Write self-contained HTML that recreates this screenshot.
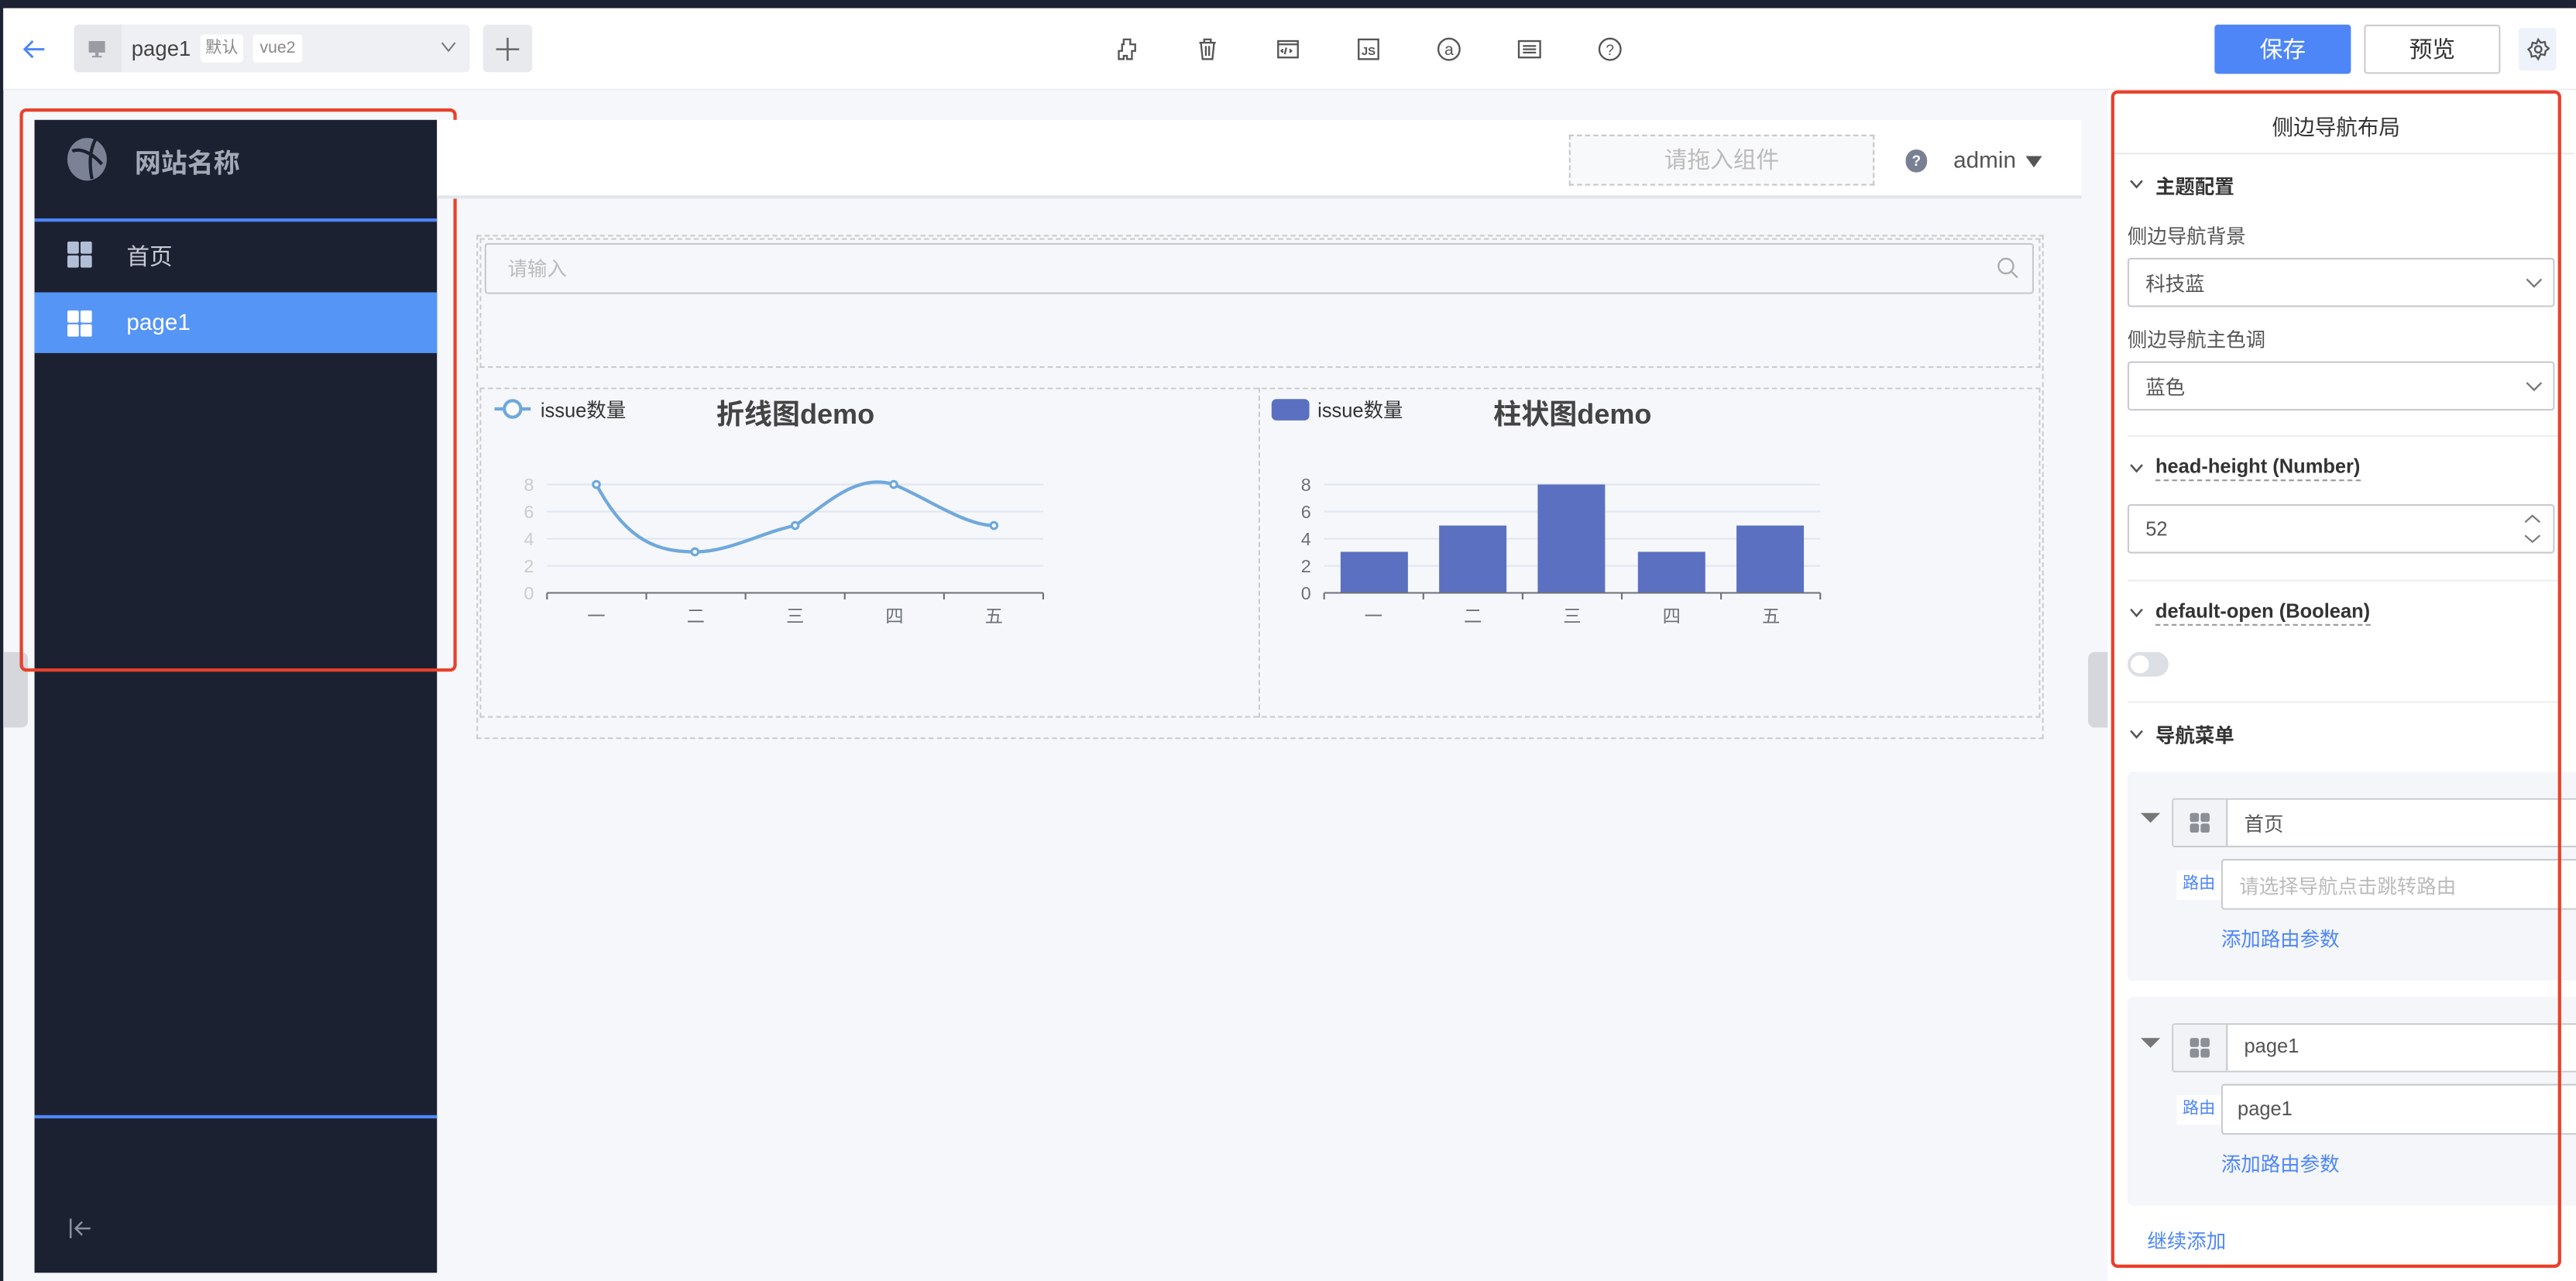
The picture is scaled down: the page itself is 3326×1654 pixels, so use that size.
<!DOCTYPE html>
<html><head><meta charset="utf-8">
<style>
*{box-sizing:border-box;margin:0;padding:0}
html,body{width:3326px;height:1654px;overflow:hidden;background:#f5f7fa}
#r{position:absolute;left:0;top:0;width:1568px;height:780px;transform:scale(2.12117,2.1205);transform-origin:0 0;font-family:"Liberation Sans","Noto Sans CJK SC",sans-serif;color:#333;background:#f5f7fa}
.a{position:absolute}
.t{white-space:nowrap}
</style></head><body><div id="r">
<div class="a" style="left:0;top:0;width:1568px;height:5px;background:#1c2133"></div>
<div class="a" style="left:0;top:0;width:2px;height:780px;background:#1c2133"></div>
<div class="a" style="left:2px;top:5px;width:1566px;height:50px;background:#fff;border-bottom:1px solid #eceef2"></div>
<svg class="a" style="left:13px;top:22px" width="16" height="16" viewBox="0 0 16 16"><path d="M14 8H2M7 3L2 8l5 5" stroke="#4e86f7" stroke-width="1.4" fill="none"/></svg>
<div class="a" style="left:45px;top:15px;width:241px;height:29px;background:#eff0f3;border-radius:3px"></div>
<div class="a" style="left:45px;top:15px;width:29px;height:29px;background:#e6e7eb;border-radius:3px 0 0 3px"></div>
<svg class="a" style="left:54px;top:25px" width="10" height="10" viewBox="0 0 10 10"><rect x="0" y="0" width="10" height="7" fill="#9a9ca3"/><rect x="4" y="7" width="2" height="2" fill="#9a9ca3"/><rect x="2" y="9" width="6" height="1" fill="#9a9ca3"/></svg>
<div class="a t" style="left:80px;top:22px;font-size:13px;color:#444">page1</div>
<div class="a t" style="left:122px;top:21px;width:26px;height:17px;background:#fff;border-radius:2px;font-size:10px;color:#888;text-align:center;line-height:17px">默认</div>
<div class="a t" style="left:154px;top:21px;width:30px;height:17px;background:#fff;border-radius:2px;font-size:10px;color:#888;text-align:center;line-height:17px">vue2</div>
<svg class="a" style="left:268px;top:25px" width="10" height="8"><path d="M1 1l4 5 4-5" stroke="#777" fill="none"/></svg>
<div class="a" style="left:294px;top:15px;width:30px;height:29px;background:#e9eaee;border-radius:3px"></div>
<svg class="a" style="left:301px;top:22px" width="16" height="16"><path d="M8 1v14M1 8h14" stroke="#666" stroke-width="1.2"/></svg>
<svg class="a" style="left:678px;top:22px" width="16" height="16" viewBox="0 0 16 16" fill="none" stroke="#555" stroke-width="1.1"><path d="M6 2h4v3h3v4h-2v5H8v-2H6v2H3V9h2V5h1z"/></svg>
<svg class="a" style="left:727px;top:22px" width="16" height="16" viewBox="0 0 16 16" fill="none" stroke="#555" stroke-width="1.1"><path d="M3 4h10M6 4V2h4v2M4 4l1 10h6l1-10M7 6v6M9 6v6"/></svg>
<svg class="a" style="left:776px;top:22px" width="16" height="16" viewBox="0 0 16 16" fill="none" stroke="#555" stroke-width="1.1"><rect x="2" y="3" width="12" height="10"/><path d="M2 5h12M7 7l-1 4M5 8l-1 1 1 1M9 8l1 1-1 1"/></svg>
<svg class="a" style="left:825px;top:22px" width="16" height="16" viewBox="0 0 16 16" fill="none" stroke="#555" stroke-width="1.1"><rect x="2" y="2" width="12" height="12"/><text x="8" y="11.5" font-size="7" text-anchor="middle" fill="#555" stroke="none" font-family="Liberation Sans" font-weight="bold">JS</text></svg>
<svg class="a" style="left:874px;top:22px" width="16" height="16" viewBox="0 0 16 16" fill="none" stroke="#555" stroke-width="1.1"><circle cx="8" cy="8" r="6.5"/><text x="8" y="11.5" font-size="10" text-anchor="middle" fill="#555" stroke="none" font-family="Liberation Sans">a</text></svg>
<svg class="a" style="left:923px;top:22px" width="16" height="16" viewBox="0 0 16 16" fill="none" stroke="#555" stroke-width="1.1"><rect x="1.5" y="3" width="13" height="10"/><path d="M4 6h8M4 8h8M4 10h8"/></svg>
<svg class="a" style="left:972px;top:22px" width="16" height="16" viewBox="0 0 16 16" fill="none" stroke="#555" stroke-width="1.1"><circle cx="8" cy="8" r="6.5"/><text x="8" y="11.5" font-size="9" text-anchor="middle" fill="#555" stroke="none" font-family="Liberation Sans">?</text></svg>
<div class="a t" style="left:1348px;top:15px;width:83px;height:30px;background:#4e86f7;border-radius:2px;color:#fff;font-size:14px;text-align:center;line-height:30px">保存</div>
<div class="a t" style="left:1439px;top:15px;width:83px;height:30px;background:#fff;border:1px solid #ccc;border-radius:2px;color:#333;font-size:14px;text-align:center;line-height:28px">预览</div>
<div class="a" style="left:1533px;top:17px;width:23px;height:26px;background:#eef2fb;border-radius:2px"></div>
<svg class="a" style="left:1538px;top:23px" width="14" height="14" viewBox="0 0 14 14" fill="none" stroke="#555" stroke-width="1.1"><circle cx="7" cy="7" r="2"/><path d="M7 1l1.5 2 2.5-.5.5 2.5 2 1.5-2 1.5-.5 2.5-2.5-.5L7 13l-1.5-2-2.5.5-.5-2.5L1 7l2-1.5.5-2.5 2.5.5z"/></svg>

<div class="a" style="left:2px;top:397px;width:15px;height:46px;background:#d5d7dc;border-radius:0 4px 4px 0"></div>
<div class="a" style="left:1271px;top:397px;width:12px;height:46px;background:#d5d7dc;border-radius:4px 0 0 4px"></div>

<div class="a" style="left:21px;top:73px;width:245px;height:702px;background:#1c2132"></div>
<svg class="a" style="left:40px;top:83px" width="28" height="28" viewBox="0 0 28 28"><ellipse cx="13" cy="14" rx="12" ry="13" fill="#7b8295"/><path d="M4 9c5-2 12 1 18 8M18 2c-3 6-4 14-2 24" stroke="#1c2132" stroke-width="2" fill="none"/></svg>
<div class="a t" style="left:82px;top:86px;font-size:16px;font-weight:bold;color:#a3a8b5">网站名称</div>
<div class="a" style="left:21px;top:133px;width:245px;height:1.5px;background:#4e86f7"></div>
<svg class="a" style="left:41px;top:147px" width="15" height="16" viewBox="0 0 15 16" fill="#b2bed6"><rect width="7" height="7.5" rx="1"/><rect x="8" width="7" height="7.5" rx="1"/><rect y="8.5" width="7" height="7.5" rx="1"/><rect x="8" y="8.5" width="7" height="7.5" rx="1"/></svg>
<div class="a t" style="left:77px;top:146px;font-size:14px;color:#c7cbd4">首页</div>
<div class="a" style="left:21px;top:178px;width:245px;height:37px;background:#5595f5"></div>
<svg class="a" style="left:41px;top:189px" width="15" height="16" viewBox="0 0 15 16" fill="#fff"><rect width="7" height="7.5" rx="1"/><rect x="8" width="7" height="7.5" rx="1"/><rect y="8.5" width="7" height="7.5" rx="1"/><rect x="8" y="8.5" width="7" height="7.5" rx="1"/></svg>
<div class="a t" style="left:77px;top:188px;font-size:14px;color:#fff">page1</div>
<div class="a" style="left:21px;top:679px;width:245px;height:1.5px;background:#4e86f7"></div>
<svg class="a" style="left:42px;top:742px" width="14" height="12" viewBox="0 0 14 12" fill="none" stroke="#8a90a0" stroke-width="1.2"><path d="M1 0v12M13 6H4M8 2L4 6l4 4"/></svg>
<div class="a" style="left:12px;top:66px;width:266px;height:343px;border:2px solid #e8412c;border-radius:4px"></div>

<div class="a" style="left:266px;top:73px;width:1001px;height:48px;background:#fff;border-bottom:2px solid #e2e5ea"></div>
<div class="a t" style="left:955px;top:82px;width:186px;height:31px;border:1px dashed #c8c8c8;background:#f8f9fa;color:#bbb;font-size:14px;text-align:center;line-height:29px">请拖入组件</div>
<div class="a" style="left:1160px;top:91px;width:13px;height:14px;border-radius:7px;background:#7a8094;color:#fff;font-size:9px;text-align:center;line-height:14px;font-weight:bold">?</div>
<div class="a t" style="left:1189px;top:89px;font-size:14px;color:#555">admin</div>
<svg class="a" style="left:1233px;top:95px" width="10" height="7"><path d="M0 0h10L5 7z" fill="#555"/></svg>

<div class="a" style="left:290px;top:143px;width:954px;height:307px;border:1px dashed #ccc"></div>
<div class="a" style="left:292px;top:145px;width:950px;height:79px;border:1px dashed #ccc"></div>
<div class="a" style="left:295px;top:148px;width:943px;height:31px;border:1px solid #c6c8cc;border-radius:2px"></div>
<div class="a t" style="left:309px;top:155px;font-size:12px;color:#bbb">请输入</div>
<svg class="a" style="left:1215px;top:156px" width="14" height="14" fill="none" stroke="#aaa" stroke-width="1.1"><circle cx="6" cy="6" r="4.5"/><path d="M9.5 9.5L13 13"/></svg>
<div class="a" style="left:292px;top:236px;width:950px;height:201px;border:1px dashed #ccc"></div>
<div class="a" style="left:766px;top:236px;width:1px;height:201px;border-left:1px dashed #ccc"></div>

<svg class="a" style="left:292px;top:236px" width="950" height="200" font-family="Liberation Sans,Noto Sans CJK SC,sans-serif">
 <path d="M9 13h22" stroke="#6fa8dc" stroke-width="2"/><circle cx="20" cy="13" r="5" fill="#fff" stroke="#6fa8dc" stroke-width="2"/>
 <text x="37" y="18" font-size="12" fill="#333">issue数量</text>
 <text x="144" y="22" font-size="17" font-weight="bold" fill="#444">折线图demo</text>
 <g stroke="#e0e6f1"><path d="M41 59h302M41 75.5h302M41 92h302M41 108.5h302"/></g>
 <path d="M41 125h302M41 125v4M101.4 125v4M161.8 125v4M222.2 125v4M282.6 125v4M343 125v4" stroke="#6e7079" stroke-width="1"/>
 <g font-size="11" fill="#ccc" text-anchor="end"><text x="33" y="63">8</text><text x="33" y="79.5">6</text><text x="33" y="96">4</text><text x="33" y="112.5">2</text><text x="33" y="129">0</text></g>
 <g font-size="11" fill="#6e7079" text-anchor="middle"><text x="71" y="143">一</text><text x="131.5" y="143">二</text><text x="192" y="143">三</text><text x="252.5" y="143">四</text><text x="313" y="143">五</text></g>
 <path d="M71 59C90 95 110 100 131 100C152 100 172 88 192 84C212 70 230 52 252 59C270 66 295 84 313 84" stroke="#6fa8dc" stroke-width="2" fill="none"/>
 <g fill="#fff" stroke="#6fa8dc" stroke-width="1.5"><circle cx="71" cy="59" r="2"/><circle cx="131" cy="100" r="2"/><circle cx="192" cy="84" r="2"/><circle cx="252" cy="59" r="2"/><circle cx="313" cy="84" r="2"/></g>
 <rect x="482" y="7" width="23" height="13" rx="3" fill="#5b70c1"/>
 <text x="510" y="18" font-size="12" fill="#333">issue数量</text>
 <text x="617" y="22" font-size="17" font-weight="bold" fill="#444">柱状图demo</text>
 <g stroke="#e0e6f1"><path d="M514 59h302M514 75.5h302M514 92h302M514 108.5h302"/></g>
 <g fill="#5b70c1"><rect x="524" y="100" width="41" height="25"/><rect x="584" y="84" width="41" height="41"/><rect x="644" y="59" width="41" height="66"/><rect x="705" y="100" width="41" height="25"/><rect x="765" y="84" width="41" height="41"/></g>
 <path d="M514 125h302M514 125v4M574.4 125v4M634.8 125v4M695.2 125v4M755.6 125v4M816 125v4" stroke="#6e7079" stroke-width="1"/>
 <g font-size="11" fill="#6e7079" text-anchor="end"><text x="506" y="63">8</text><text x="506" y="79.5">6</text><text x="506" y="96">4</text><text x="506" y="112.5">2</text><text x="506" y="129">0</text></g>
 <g font-size="11" fill="#6e7079" text-anchor="middle"><text x="544" y="143">一</text><text x="604.5" y="143">二</text><text x="665" y="143">三</text><text x="725.5" y="143">四</text><text x="786" y="143">五</text></g>
</svg>

<div class="a" style="left:1283px;top:55px;width:285px;height:725px;background:#fff"></div>
<div class="a t" style="left:1287px;top:67px;width:270px;text-align:center;font-size:13px;color:#333">侧边导航布局</div>
<div class="a" style="left:1287px;top:93px;width:280px;height:1px;background:#e8e9ec"></div>
<svg class="a" style="left:1296px;top:109px" width="9" height="7"><path d="M1 1l3.5 4L8 1" stroke="#555" fill="none" stroke-width="1.2"/></svg>
<div class="a t" style="left:1312px;top:105px;font-size:12px;font-weight:bold;color:#333">主题配置</div>
<div class="a t" style="left:1295px;top:135px;font-size:12px;color:#555">侧边导航背景</div>
<div class="a" style="left:1295px;top:157px;width:260px;height:30px;border:1px solid #c8cacf;border-radius:2px"></div>
<div class="a t" style="left:1306px;top:164px;font-size:12px;color:#555">科技蓝</div>
<svg class="a" style="left:1537px;top:169px" width="11" height="7"><path d="M1 1l4.5 4.5L10 1" stroke="#777" fill="none" stroke-width="1.1"/></svg>
<div class="a t" style="left:1295px;top:198px;font-size:12px;color:#555">侧边导航主色调</div>
<div class="a" style="left:1295px;top:220px;width:260px;height:30px;border:1px solid #c8cacf;border-radius:2px"></div>
<div class="a t" style="left:1306px;top:227px;font-size:12px;color:#555">蓝色</div>
<svg class="a" style="left:1537px;top:232px" width="11" height="7"><path d="M1 1l4.5 4.5L10 1" stroke="#777" fill="none" stroke-width="1.1"/></svg>
<div class="a" style="left:1295px;top:265px;width:262px;height:1px;background:#ebedf0"></div>
<svg class="a" style="left:1296px;top:282px" width="9" height="7"><path d="M1 1l3.5 4L8 1" stroke="#555" fill="none" stroke-width="1.2"/></svg>
<div class="a t" style="left:1312px;top:277px;font-size:12px;font-weight:bold;color:#333;border-bottom:1px dashed #999;line-height:15px">head-height (Number)</div>
<div class="a" style="left:1295px;top:307px;width:260px;height:30px;border:1px solid #c8cacf;border-radius:2px"></div>
<div class="a t" style="left:1306px;top:315px;font-size:12px;color:#555">52</div>
<svg class="a" style="left:1536px;top:312px" width="11" height="20"><path d="M1 6l4.5-4L10 6M1 14l4.5 4L10 14" stroke="#777" fill="none" stroke-width="1"/></svg>
<div class="a" style="left:1295px;top:353px;width:262px;height:1px;background:#ebedf0"></div>
<svg class="a" style="left:1296px;top:370px" width="9" height="7"><path d="M1 1l3.5 4L8 1" stroke="#555" fill="none" stroke-width="1.2"/></svg>
<div class="a t" style="left:1312px;top:365px;font-size:12px;font-weight:bold;color:#333;border-bottom:1px dashed #999;line-height:15px">default-open (Boolean)</div>
<div class="a" style="left:1295px;top:397px;width:25px;height:15px;border-radius:8px;background:#dcdfe4"></div>
<div class="a" style="left:1297px;top:399px;width:11px;height:11px;border-radius:6px;background:#fff"></div>
<div class="a" style="left:1295px;top:427px;width:262px;height:1px;background:#ebedf0"></div>
<svg class="a" style="left:1296px;top:444px" width="9" height="7"><path d="M1 1l3.5 4L8 1" stroke="#555" fill="none" stroke-width="1.2"/></svg>
<div class="a t" style="left:1312px;top:439px;font-size:12px;font-weight:bold;color:#333">导航菜单</div>

<div class="a" style="left:1295px;top:470px;width:273px;height:127px;background:#f4f6f9;border-radius:3px 0 0 3px"></div>
<svg class="a" style="left:1303px;top:495px" width="12" height="7"><path d="M0 0h12L6 6z" fill="#777"/></svg>
<div class="a" style="left:1322px;top:486px;width:246px;height:30px;border:1px solid #c8cacf;border-right:none;background:#fff;border-radius:2px 0 0 2px"></div>
<div class="a" style="left:1323px;top:487px;width:33px;height:28px;background:#f1f3f6;border-right:1px solid #c8cacf"></div>
<svg class="a" style="left:1333px;top:495px" width="12" height="12" fill="#8c8f96"><rect width="5.5" height="5.5" rx="1.3"/><rect x="6.5" width="5.5" height="5.5" rx="1.3"/><rect y="6.5" width="5.5" height="5.5" rx="1.3"/><rect x="6.5" y="6.5" width="5.5" height="5.5" rx="1.3"/></svg>
<div class="a t" style="left:1366px;top:493px;font-size:12px;color:#555">首页</div>
<div class="a t" style="left:1325px;top:530px;width:27px;height:18px;background:#fff;font-size:10px;color:#4e86f7;text-align:center;line-height:18px">路由</div>
<div class="a" style="left:1352px;top:523px;width:216px;height:31px;border:1px solid #c8cacf;border-right:none;background:#fff;border-radius:2px 0 0 2px"></div>
<div class="a t" style="left:1363px;top:531px;font-size:12px;color:#bbb">请选择导航点击跳转路由</div>
<div class="a t" style="left:1352px;top:563px;font-size:12px;color:#4e86f7">添加路由参数</div>

<div class="a" style="left:1295px;top:607px;width:273px;height:127px;background:#f4f6f9;border-radius:3px 0 0 3px"></div>
<svg class="a" style="left:1303px;top:632px" width="12" height="7"><path d="M0 0h12L6 6z" fill="#777"/></svg>
<div class="a" style="left:1322px;top:623px;width:246px;height:30px;border:1px solid #c8cacf;border-right:none;background:#fff;border-radius:2px 0 0 2px"></div>
<div class="a" style="left:1323px;top:624px;width:33px;height:28px;background:#f1f3f6;border-right:1px solid #c8cacf"></div>
<svg class="a" style="left:1333px;top:632px" width="12" height="12" fill="#8c8f96"><rect width="5.5" height="5.5" rx="1.3"/><rect x="6.5" width="5.5" height="5.5" rx="1.3"/><rect y="6.5" width="5.5" height="5.5" rx="1.3"/><rect x="6.5" y="6.5" width="5.5" height="5.5" rx="1.3"/></svg>
<div class="a t" style="left:1366px;top:630px;font-size:12px;color:#555">page1</div>
<div class="a t" style="left:1325px;top:667px;width:27px;height:18px;background:#fff;font-size:10px;color:#4e86f7;text-align:center;line-height:18px">路由</div>
<div class="a" style="left:1352px;top:660px;width:216px;height:31px;border:1px solid #c8cacf;border-right:none;background:#fff;border-radius:2px 0 0 2px"></div>
<div class="a t" style="left:1362px;top:668px;font-size:12px;color:#555">page1</div>
<div class="a t" style="left:1352px;top:700px;font-size:12px;color:#4e86f7">添加路由参数</div>
<div class="a t" style="left:1307px;top:747px;font-size:12px;color:#4e86f7">继续添加</div>

<div class="a" style="left:1285px;top:55px;width:274px;height:717px;border:2px solid #e8412c;border-radius:4px"></div>
</div></body></html>
